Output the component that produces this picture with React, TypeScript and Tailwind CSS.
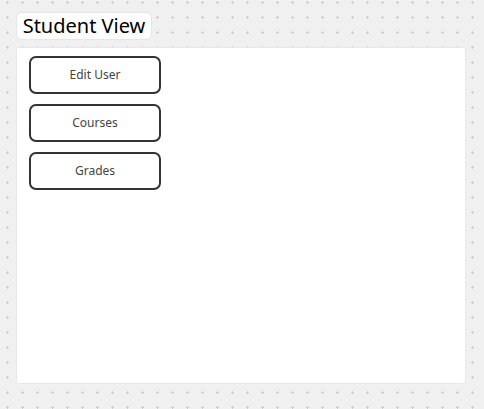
export default function App() {
  const items = ["Edit User", "Courses", "Grades"];
  return (
    <div
      className="w-[484px] h-[409px] bg-[#f0f0f0] bg-[radial-gradient(circle,#cdcdcd_1px,transparent_1.2px)] bg-[length:15px_15px] bg-[position:0px_-5px] pl-4 pt-3 overflow-hidden"
      style={{ fontFamily: '"Noto Sans", "Open Sans", sans-serif' }}
    >
      <div className="w-[136px] h-[28px] bg-white rounded-[6px] border border-[#e6e6e6] flex items-center justify-center text-[20px] text-black leading-none">
        Student View
      </div>
      <div className="mt-[7px] w-[450px] h-[337px] bg-white rounded-[3px] border border-[#e8e8e8] pl-[12px] pt-[8px] flex flex-col gap-[10px]">
        {items.map((t) => (
          <div
            key={t}
            className="w-[132px] h-[38px] border-2 border-[#333333] rounded-[7px] flex items-center justify-center text-[12px] text-[#444444]"
          >
            {t}
          </div>
        ))}
      </div>
    </div>
  );
}
